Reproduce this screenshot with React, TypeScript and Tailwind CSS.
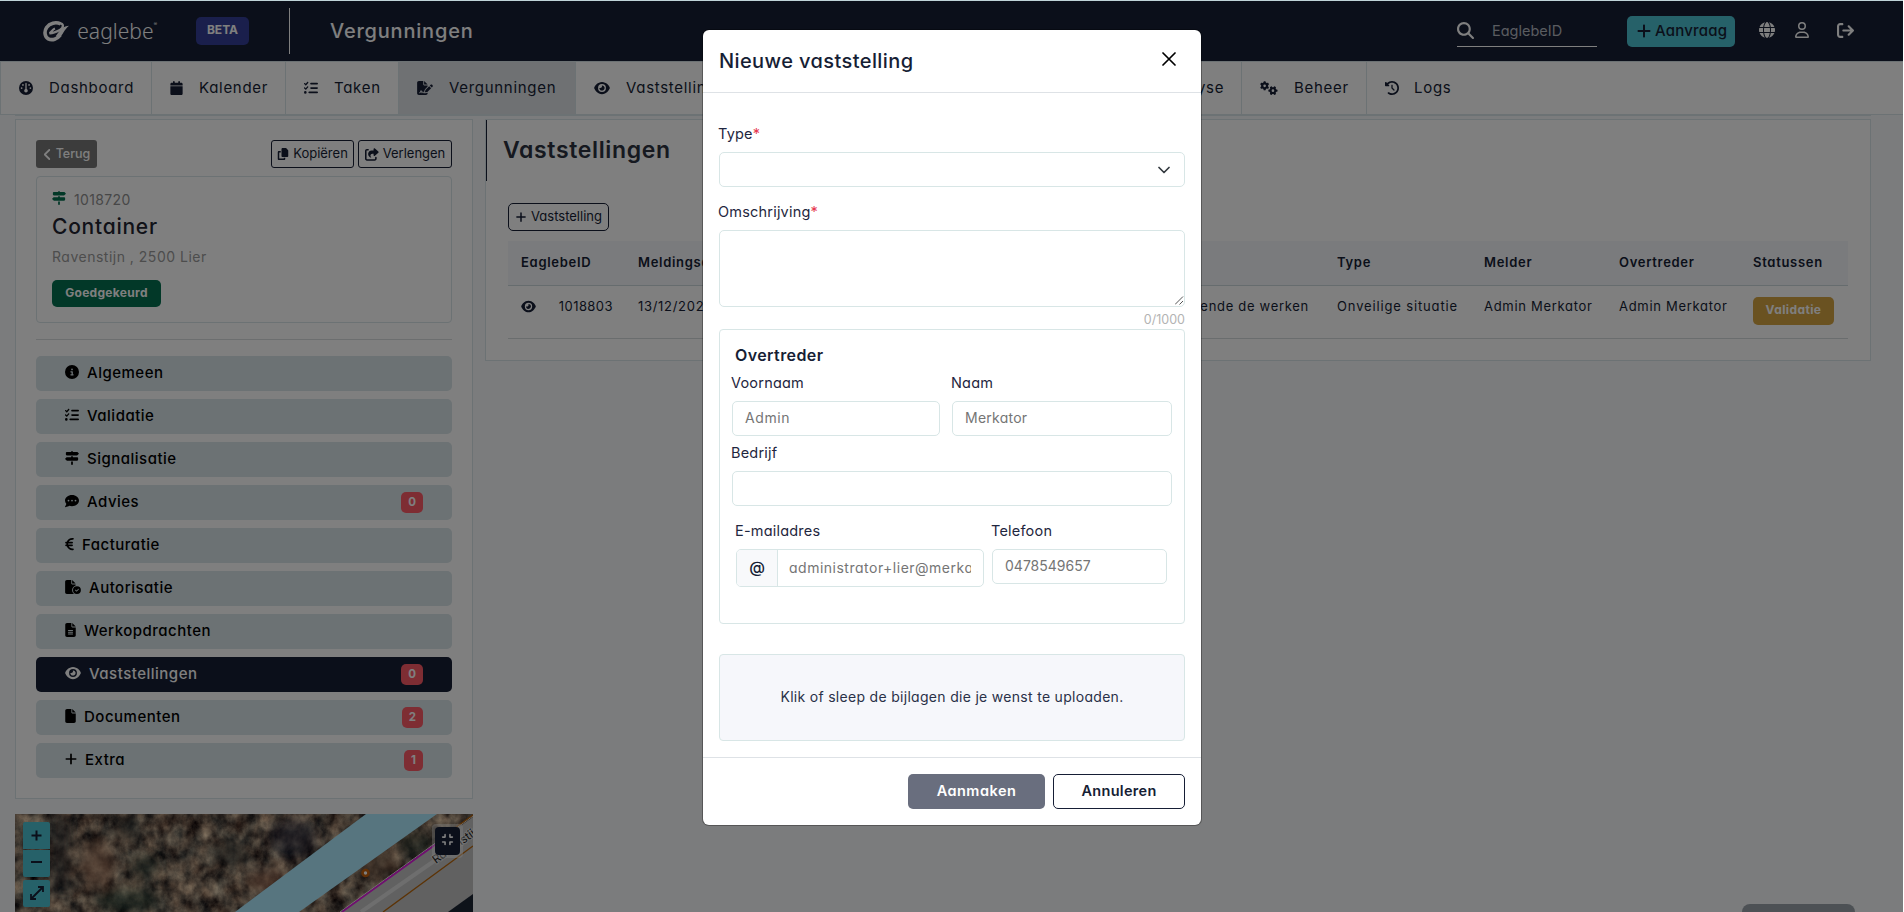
import type { IconType } from 'react-icons'
import {
  FaAngleLeft,
  FaArrowRightFromBracket,
  FaCalendar,
  FaCircleInfo,
  FaClockRotateLeft,
  FaCommentDots,
  FaCompress,
  FaCopy,
  FaEuroSign,
  FaEye,
  FaFile,
  FaFileCircleCheck,
  FaFileLines,
  FaFileSignature,
  FaGauge,
  FaGears,
  FaGlobe,
  FaListCheck,
  FaMagnifyingGlass,
  FaPlus,
  FaRegUser,
  FaShareFromSquare,
  FaSignsPost,
} from 'react-icons/fa6'

const navItems = [
  { label: 'Dashboard', icon: FaGauge, size: 'w-[14px]', width: 'w-[151px]', text: 'pl-4' },
  { label: 'Kalender', icon: FaCalendar, size: 'w-[13px]', width: 'w-[134px]', text: 'pl-4' },
  { label: 'Taken', icon: FaListCheck, size: 'w-[14px]', width: 'w-[113px]', text: 'pl-4' },
  { label: 'Vergunningen', icon: FaFileSignature, size: 'w-4', width: 'w-[177px]', text: 'pl-4', active: true },
  { label: 'Vaststellingen', icon: FaEye, size: 'w-4', width: 'w-[184px]', text: 'pl-4' },
  { label: 'Werkopdrachten', icon: FaFileLines, size: 'w-[11px]', width: 'w-[200px]', text: 'pl-4' },
  { label: 'Kaart', icon: FaGlobe, size: 'w-[14px]', width: 'w-[130px]', text: 'pl-4' },
  { label: 'Analyse', icon: FaListCheck, size: 'w-[14px]', width: 'w-[152px]', text: 'pl-[40px]' },
  { label: 'Beheer', icon: FaGears, size: 'w-[18px]', width: 'w-[125px]', text: 'pl-4' },
  { label: 'Logs', icon: FaClockRotateLeft, size: 'w-[14px]', width: 'w-[120px]', text: 'pl-[15px]' },
]

const sideItems: { label: string; icon: IconType; size: string; count?: number; active?: boolean }[] = [
  { label: 'Algemeen', icon: FaCircleInfo, size: 'w-[14px]' },
  { label: 'Validatie', icon: FaListCheck, size: 'w-[14px]' },
  { label: 'Signalisatie', icon: FaSignsPost, size: 'w-[14px]' },
  { label: 'Advies', icon: FaCommentDots, size: 'w-[14px]', count: 0 },
  { label: 'Facturatie', icon: FaEuroSign, size: 'w-[9px]' },
  { label: 'Autorisatie', icon: FaFileCircleCheck, size: 'w-4' },
  { label: 'Werkopdrachten', icon: FaFileLines, size: 'w-[11px]' },
  { label: 'Vaststellingen', icon: FaEye, size: 'w-4', count: 0, active: true },
  { label: 'Documenten', icon: FaFile, size: 'w-[11px]', count: 2 },
  { label: 'Extra', icon: FaPlus, size: 'w-[12px]', count: 1 },
]

function Logo() {
  return (
    <div className="flex w-[114px] items-center text-white">
      <svg width="29" height="23" viewBox="0 0 29 23" fill="none">
        <path
          d="M19.5 3C14 0.6 7.4 2.2 4 7C1 11.6 2 17.6 5.8 19.6C10.2 21.8 15.8 20 19.2 15.4"
          stroke="currentColor"
          strokeWidth="4"
        />
        <path
          d="M18 2.6C23.5 2 23 7.6 18.6 9.8C15 11.8 11.6 13.6 7.2 13.4C9.8 12.2 9.8 9.6 13.2 8.2"
          stroke="currentColor"
          strokeWidth="2.6"
        />
        <path d="M29 5C24 5.2 21 7.4 18.4 10.8L14.2 16.4L17.8 19C22 15.8 23.4 9.2 29 5Z" fill="currentColor" />
      </svg>
      <span className="ml-2 font-[Noto_Sans,sans-serif] text-[21px] leading-6 font-light tracking-[0.05px]">
        eaglebe
      </span>
      <span className="mb-3 text-[5px]">®</span>
    </div>
  )
}

function Header() {
  return (
    <header className="flex h-[60px] items-center bg-[#161e35] pl-[43px] text-white">
      <Logo />
      <span className="ml-[39px] flex h-7 w-[53px] items-center justify-center rounded-[5px] bg-[#343e98] pb-0.5 text-xs font-bold">
        BETA
      </span>
      <div className="ml-10 h-[46px] w-px bg-white" />
      <h1 className="ml-[40px] text-xl font-medium tracking-[0.8px]">Vergunningen</h1>
      <div className="ml-auto flex items-center pr-[49px]">
        <div className="flex h-8 w-[140px] items-center border-b border-white">
          <FaMagnifyingGlass size={17} />
          <span className="ml-[18px] text-[14.5px] text-[#b4b8c0]">EaglebeID</span>
        </div>
        <button className="ml-[30px] flex h-[31px] w-[108px] items-center rounded-[5px] bg-[#4cc2d2] pl-[10px] text-[15px] font-medium text-[#161e35]">
          <FaPlus className="h-4 w-[14px]" />
          <span className="ml-1 tracking-[0.2px]">Aanvraag</span>
        </button>
        <FaGlobe size={16} className="mb-0.5 ml-6" />
        <FaRegUser className="mb-0.5 ml-5 h-4 w-[14px]" />
        <FaArrowRightFromBracket size={17} className="mb-0.5 ml-7" />
      </div>
    </header>
  )
}

function Nav() {
  return (
    <nav className="flex h-[54px] border-y border-[#d8e4e8] bg-white text-[15px] tracking-[0.7px] text-[#161e35]">
      {navItems.map(({ label, icon: Icon, size, width, text, active }) => (
        <div
          key={label}
          className={`flex shrink-0 items-center border-l border-[#d8e4e8] pl-[18px] ${width} ${active ? 'bg-[#dee2e6]' : ''}`}
        >
          <Icon className={`h-[14px] shrink-0 ${size}`} />
          <span className={text}>{label}</span>
        </div>
      ))}
    </nav>
  )
}

function Sidebar() {
  return (
    <div className="h-[680px] border border-[#d8e4e8] bg-white px-5 pt-5">
      <div className="flex gap-1 text-[13px] text-[#161e35]">
        <button className="mr-auto flex h-7 w-[61px] items-center justify-center gap-1 rounded-[3px] bg-[#787878] text-[12.5px] font-medium text-white">
          <FaAngleLeft className="h-[15px] w-[9px]" />
          Terug
        </button>
        <button className="flex h-7 w-[83px] items-center justify-center gap-1 rounded-[3px] border border-[#161e35]">
          <FaCopy size={12} />
          Kopiëren
        </button>
        <button className="flex h-7 w-[94px] items-center justify-center gap-1 rounded-[3px] border border-[#161e35]">
          <FaShareFromSquare className="h-[13px] w-[14px]" />
          Verlengen
        </button>
      </div>

      <div className="mt-2 h-[147px] rounded-[4px] border border-[#d8e4e8] px-[15px] pt-[10px]">
        <div className="flex h-6 items-center text-[14px] tracking-[0.35px] text-[#8f8f8f]">
          <FaSignsPost size={14} className="mr-2 mb-0.5 text-[#04704f]" />
          1018720
        </div>
        <h2 className="mt-0.5 text-[21px] leading-7 font-medium tracking-[0.75px] text-[#222531]">Container</h2>
        <p className="mt-[5px] text-[14px] leading-[22px] tracking-[0.5px] text-[#9a9a9a]">Ravenstijn , 2500 Lier</p>
        <span className="mt-3 flex h-[27px] w-[109px] items-center justify-center rounded-[5px] bg-[#047050] pb-px text-[12px] font-bold tracking-[0.3px] text-white">
          Goedgekeurd
        </span>
      </div>

      <hr className="mt-4 border-[#d8dcde]" />

      <ul className="mt-4 flex flex-col gap-2 text-[15px] font-medium tracking-[0.5px] text-black">
        {sideItems.map(({ label, icon: Icon, size, count, active }) => (
          <li
            key={label}
            className={`flex h-[35px] items-center rounded-[5px] pr-[29px] pl-[29px] ${active ? 'bg-[#161e35] text-white' : 'bg-[#d8e4e8]'}`}
          >
            <Icon className={`mr-2 mb-[3px] h-[14px] shrink-0 ${size}`} />
            {label}
            {count !== undefined && (
              <span className="ml-auto flex h-[21px] items-center rounded-[5px] bg-[#fd5a67] px-[7px] text-[11.5px] font-bold tracking-normal text-white">
                {count}
              </span>
            )}
          </li>
        ))}
      </ul>
    </div>
  )
}

function MapPreview() {
  return (
    <div className="relative mt-[15px] h-[98px] overflow-hidden bg-[#75685a]">
      <svg width="458" height="98" viewBox="0 0 458 98" className="block">
        <defs>
          <filter id="wood" x="0" y="0" width="100%" height="100%" colorInterpolationFilters="sRGB">
            <feTurbulence type="fractalNoise" baseFrequency="0.07 0.06" numOctaves="5" seed="8" />
            <feColorMatrix
              values="1.2 0.2 0 0 -0.21
                      1.05 0.3 0 0 -0.25
                      0.85 0.3 0 0 -0.21
                      0 0 0 0 1"
            />
          </filter>
          <filter id="soft" x="-50%" y="-50%" width="200%" height="200%">
            <feGaussianBlur stdDeviation="6" />
          </filter>
        </defs>
        <rect width="458" height="98" filter="url(#wood)" />
        <g filter="url(#soft)" opacity="0.6">
          <rect x="36" y="4" width="20" height="74" fill="#1c2426" />
          <ellipse cx="112" cy="86" rx="32" ry="12" fill="#2d4a3c" />
          <ellipse cx="130" cy="52" rx="14" ry="12" fill="#23342f" />
          <ellipse cx="278" cy="25" rx="24" ry="20" fill="#20283a" />
          <ellipse cx="215" cy="40" rx="18" ry="12" fill="#2b3030" />
          <ellipse cx="112" cy="14" rx="12" ry="14" fill="#2b3030" />
          <ellipse cx="82" cy="50" rx="18" ry="24" fill="#a87a60" />
          <ellipse cx="255" cy="66" rx="22" ry="12" fill="#95604a" />
          <ellipse cx="365" cy="50" rx="22" ry="14" fill="#8b6a52" />
          <ellipse cx="400" cy="30" rx="18" ry="12" fill="#2b3a30" />
        </g>
        <path d="M351 0H422L284 98H220Z" fill="#aeeaff" />
        <path d="M326 98L458 3V98Z" fill="#c2c2c2" />
        <path d="M433 98L458 80V98Z" fill="#1d2635" />
        <path d="M346 98L422 45" stroke="#dcdcdc" strokeWidth="4" />
        <path d="M325 98L458 2" stroke="#eee" strokeWidth="1" />
        <path d="M327 98L424 28" stroke="#e01ae0" strokeWidth="1.6" />
        <path d="M368 98L458 32M440 14L458 1" stroke="#b8660c" strokeWidth="1.4" />
        <circle cx="350.5" cy="59" r="3" fill="#fff" stroke="#c4600c" strokeWidth="2.6" />
        <text
          x="421"
          y="50"
          transform="rotate(-36 421 50)"
          fill="#222"
          stroke="#ddd"
          strokeWidth="2"
          paintOrder="stroke"
          fontSize="11.5"
        >
          Ravenstijn
        </text>
      </svg>
      <div className="absolute top-2 left-2 flex flex-col text-[#161e35]">
        <span className="flex h-[27px] w-[27px] items-center justify-center rounded-t-[2px] bg-[#4cc2d2]">
          <svg width="11" height="11" viewBox="0 0 11 11" stroke="currentColor" strokeWidth="2">
            <path d="M5.5 0.5V10.5M0.5 5.5H10.5" />
          </svg>
        </span>
        <span className="mt-px flex h-[27px] w-[27px] items-center justify-center rounded-b-[2px] bg-[#4cc2d2] pb-1">
          <svg width="11" height="2" viewBox="0 0 11 2" stroke="currentColor" strokeWidth="2">
            <path d="M0 1H11" />
          </svg>
        </span>
        <span className="mt-[3px] flex h-[27px] w-[27px] items-center justify-center rounded-[2px] bg-[#4cc2d2] pb-0.5">
          <svg width="14" height="14" viewBox="0 0 14 14" fill="none" stroke="currentColor" strokeWidth="1.8">
            <path d="M1.5 12.5L12.5 1.5M8 1H13V6M1 8V13H6" />
          </svg>
        </span>
      </div>
      <div className="absolute top-[10px] right-[10px] rounded-[4px] bg-white/40 p-[3px]">
        <span className="flex h-7 w-[25px] items-center justify-center rounded-[4px] bg-[#161e35] pb-1 text-white">
          <FaCompress size={13} />
        </span>
      </div>
    </div>
  )
}

function Findings() {
  return (
    <section className="h-[242px] w-[1386px] border border-[#d8e4e8] bg-white">
      <div className="flex h-[61px] items-center border-l border-[#161e35] pb-px pl-4">
        <h2 className="text-[23px] font-semibold tracking-[0.65px] text-[#2c3240]">Vaststellingen</h2>
      </div>
      <div className="px-[22px] pt-[22px]">
        <button className="flex h-7 w-[101px] items-center justify-center gap-1 rounded-[5px] border border-[#161e35] text-[13px] text-[#161e35]">
          <FaPlus className="h-3 w-3" />
          Vaststelling
        </button>
        <table className="mt-[10px] w-[1340px] table-fixed text-left text-[13px] tracking-[0.7px] text-[#161e35]">
          <colgroup>
            <col className="w-[117px]" />
            <col className="w-[180px]" />
            <col className="w-[519px]" />
            <col className="w-[146px]" />
            <col className="w-[135px]" />
            <col className="w-[134px]" />
            <col />
          </colgroup>
          <thead>
            <tr className="h-11 border-b border-[#cdd8dc] bg-[#f4f6fa]">
              <th className="pl-[13px] font-semibold">EaglebeID</th>
              <th className="pl-[13px] font-semibold">Meldingsdatum</th>
              <th className="pl-[13px] font-semibold">Omschrijving</th>
              <th className="pl-[13px] font-semibold">Type</th>
              <th className="pl-[14px] font-semibold">Melder</th>
              <th className="pl-[14px] font-semibold">Overtreder</th>
              <th className="pl-[14px] font-semibold">Statussen</th>
            </tr>
          </thead>
          <tbody>
            <tr className="h-[53px] border-b border-[#d5dadd] align-top">
              <td className="pt-[11px] pl-[13px]">
                <div className="flex items-center justify-between pr-3 tracking-[0.45px]">
                  <FaEye className="h-[13px] w-[15px]" />
                  1018803
                </div>
              </td>
              <td className="pt-[11px] pl-[13px]">13/12/2024</td>
              <td className="pt-[11px] pr-[15px] text-right">Gevaarlijke situatie gedurende de werken</td>
              <td className="pt-[11px] pl-[13px] tracking-[0.85px]">Onveilige situatie</td>
              <td className="pt-[11px] pl-[14px]">Admin Merkator</td>
              <td className="pt-[11px] pl-[14px]">Admin Merkator</td>
              <td className="pt-[11px] pl-[14px]">
                <span className="flex h-7 w-[81px] items-center justify-center rounded-[5px] bg-[#d5a443] pb-0.5 text-[12px] font-bold tracking-[0.4px] text-white">
                  Validatie
                </span>
              </td>
            </tr>
          </tbody>
        </table>
      </div>
    </section>
  )
}

function Label({ children, required }: { children: string; required?: boolean }) {
  return (
    <span className="-ml-px block pb-0.5 text-[14.5px] leading-[19px] tracking-[0.2px] text-[#1f2740]">
      {children}
      {required && <span className="text-[#e63950]">*</span>}
    </span>
  )
}

const input =
  'mt-[7px] flex h-[35px] items-center rounded-[5px] border border-[#d8e6e6] bg-white px-3 pb-0.5 text-[14px] text-[#757575]'

function Modal() {
  return (
    <div className="h-[795px] w-[498px] rounded-[6px] bg-white text-[#161e35] ring-1 ring-black/30">
      <div className="flex h-[63px] items-center justify-between border-b border-[#dee2e6] pr-[25px] pl-4">
        <h3 className="text-xl font-medium tracking-[0.4px]">Nieuwe vaststelling</h3>
        <svg width="14" height="14" viewBox="0 0 14 14" stroke="#000" strokeWidth="1.7" strokeLinecap="round" className="mb-1">
          <path d="M1 1L13 13M13 1L1 13" />
        </svg>
      </div>

      <div className="px-4 pt-[31px] pb-4">
        <Label required>Type</Label>
        <div className={`${input} justify-end`}>
          <svg
            width="12"
            height="8"
            viewBox="0 0 12 8"
            fill="none"
            stroke="#343a40"
            strokeWidth="1.7"
            strokeLinecap="round"
            strokeLinejoin="round"
            className="mt-0.5 mr-[2px]"
          >
            <path d="M1 1.5L6 6.5L11 1.5" />
          </svg>
        </div>
        <div className="mt-[15px]">
          <Label required>Omschrijving</Label>
        </div>
        <div className="mt-[7px] flex h-[77px] items-end justify-end rounded-[5px] border border-[#d8e6e6]">
          <svg width="9" height="9" viewBox="0 0 9 9" stroke="#555" strokeWidth="1" className="mb-px">
            <path d="M0 8.5L8 0.5M4.5 8.5L8 5" />
          </svg>
        </div>
        <div className="h-[22px] text-right text-[12.5px] leading-[26px] text-[#b3b3b3]">0/1000</div>

        <div className="h-[295px] rounded-[4px] border border-[#d8e6e6] px-3 pt-[13px]">
          <h4 className="mb-[6px] pl-[3px] text-base leading-6 font-semibold tracking-[0.4px]">Overtreder</h4>
          <div className="flex gap-3">
            <div className="w-[208px]">
              <Label>Voornaam</Label>
              <div className={`${input} tracking-[0.6px]`}>Admin</div>
            </div>
            <div className="w-[220px]">
              <Label>Naam</Label>
              <div className={`${input} tracking-[0.25px]`}>Merkator</div>
            </div>
          </div>
          <div className="mt-[7px]">
            <Label>Bedrijf</Label>
            <div className={input} />
          </div>
          <div className="mt-[15px] flex gap-2 px-1">
            <div className="w-[248px]">
              <Label>E-mailadres</Label>
              <div className="mt-[7px] flex h-[38px] overflow-hidden rounded-[5px] border border-[#d8e6e6] text-[14px] text-[#757575]">
                <span className="flex w-[41px] shrink-0 items-center justify-center border-r border-[#d8e6e6] bg-[#f8f9fb] pb-0.5 text-base font-medium text-[#161e35]">
                  @
                </span>
                <span className="mr-3 ml-[11px] flex-1 overflow-hidden leading-[35px] tracking-[0.5px] whitespace-nowrap">
                  administrator+lier@merka
                </span>
              </div>
            </div>
            <div className="w-[175px]">
              <Label>Telefoon</Label>
              <div className={input}>0478549657</div>
            </div>
          </div>
        </div>

        <div className="mt-[30px] flex h-[87px] items-center justify-center rounded-[4px] border border-[#d8e6e6] bg-[#f6f7fb] pb-0.5 text-[14px] tracking-[0.3px] text-[#2a3148]">
          Klik of sleep de bijlagen die je wenst te uploaden.
        </div>
      </div>

      <div className="flex justify-end gap-2 border-t border-[#dee2e6] px-4 pt-4 text-[14.5px] font-semibold tracking-[0.3px]">
        <button className="h-[35px] w-[137px] rounded-[5px] bg-[#696e7e] pb-0.5 tracking-[0.5px] text-white">Aanmaken</button>
        <button className="h-[35px] w-[132px] rounded-[5px] border border-[#161e35] pb-0.5">Annuleren</button>
      </div>
    </div>
  )
}

export default function App() {
  return (
    <div className="relative h-[912px] w-[1904px] overflow-hidden bg-[#f6f8fa] pt-px pr-px font-[Inter,sans-serif] [font-feature-settings:'cv11']">
      <Header />
      <Nav />
      <div className="mr-8 ml-[15px] h-px bg-[#d8e4e8]" />
      <main className="mt-[3px] flex gap-3 pl-[15px]">
        <div className="w-[458px]">
          <Sidebar />
          <MapPreview />
        </div>
        <Findings />
      </main>
      <div className="absolute bottom-0 left-[1742px] h-2 w-[113px] rounded-t-lg bg-[#9aa2aa]" />

      <div className="absolute inset-0 mt-px mr-px flex items-start justify-center bg-black/50 pt-[29px] pl-px">
        <Modal />
      </div>
      <div className="absolute inset-x-0 top-0 h-px bg-[#c0d4d8]" />
      <div className="absolute inset-y-0 right-0 w-px bg-white" />
    </div>
  )
}
